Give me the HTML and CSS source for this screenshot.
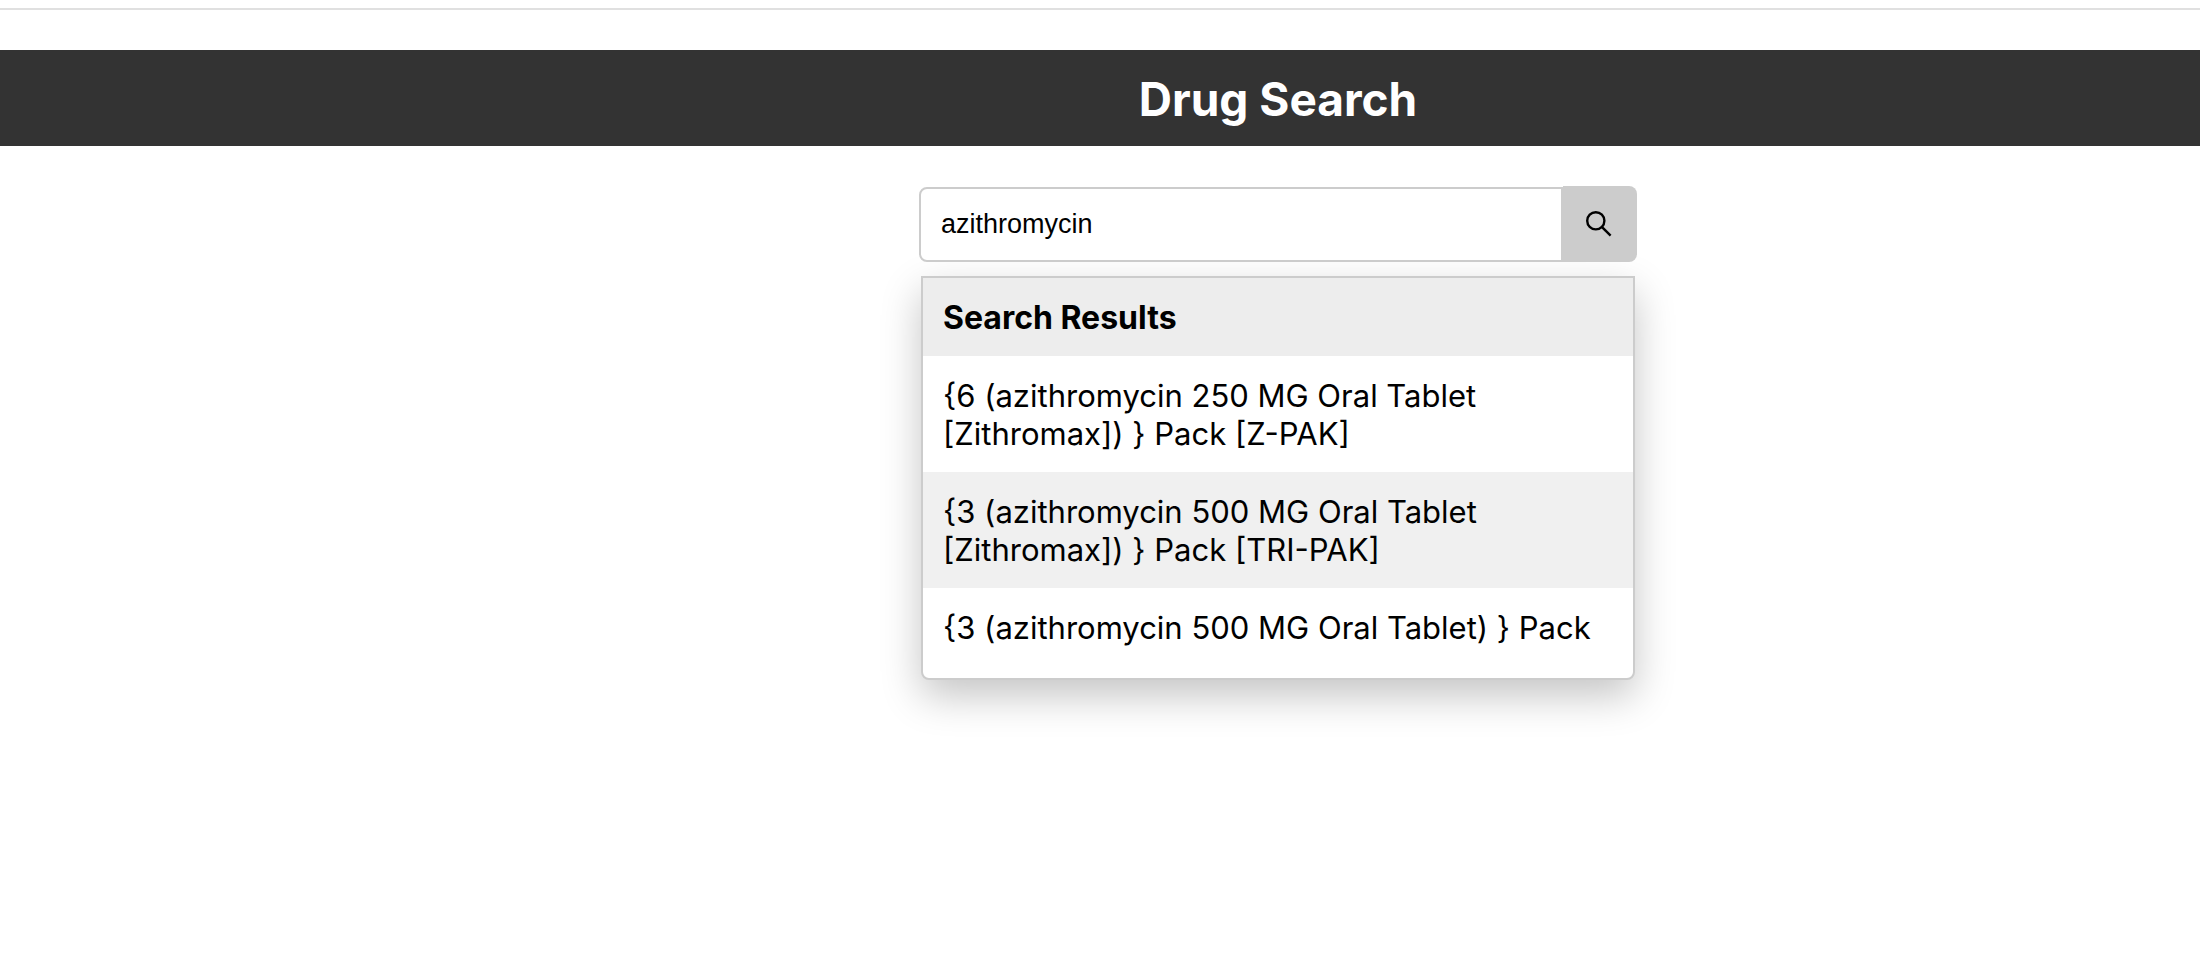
FILE: index.html
```html
<!DOCTYPE html>
<html lang="en">
<head>
<meta charset="utf-8">
<meta name="viewport" content="width=device-width, initial-scale=1">
<title>Drug Search</title>
<link rel="stylesheet" href="styles.css">
</head>
<body>
<div class="divider"></div>
<header class="banner"><h1 class="banner-title">Drug Search</h1></header>
<main class="content">
  <div class="search">
    <form class="search-form" role="search">
      <input class="search-input" type="text" aria-label="Drug name" value="azithromycin">
      <button class="search-button" type="button" aria-label="Search">
        <svg class="search-icon" viewBox="0 0 26 26" aria-hidden="true">
          <circle cx="9.8" cy="9.8" r="8.6"/>
          <path d="M15.8 15.8L24.6 24.6"/>
        </svg>
      </button>
    </form>
    <section class="results">
      <h2 class="results-title">Search Results</h2>
      <ul class="results-list">
        <li class="result">{6 (azithromycin 250 MG Oral Tablet [Zithromax]) } Pack [Z-PAK]</li>
        <li class="result result-active">{3 (azithromycin 500 MG Oral Tablet [Zithromax]) } Pack [TRI-PAK]</li>
        <li class="result">{3 (azithromycin 500 MG Oral Tablet) } Pack</li>
      </ul>
    </section>
  </div>
</main>
</body>
</html>
```
FILE: styles.css
```css
* {
  box-sizing: border-box;
}

body {
  min-height: 100vh;
  margin: 0;
  padding-top: 8px;
  background: #fff;
  color: #000;
  font-family: Inter, "Liberation Sans", sans-serif;
}

.divider {
  height: 2px;
  margin-bottom: 40px;
  background: #e0e0e0;
}

.banner {
  padding: 21px 0 19px 356px;
  background: #333;
}

.banner-title {
  margin: 0;
  color: #fff;
  font-size: 46px;
  font-weight: 700;
  line-height: 56px;
  text-align: center;
}

.content {
  display: flex;
  justify-content: center;
  padding: 40px 0 80px 356px;
}

.search {
  flex: 0 1 718px;
}

.search-form {
  display: flex;
  align-items: flex-end;
}

.search-input {
  flex: 1;
  min-width: 0;
  height: 75px;
  padding: 0 20px;
  border: 2px solid #ccc;
  border-radius: 8px 0 0 8px;
  outline: none;
  background: #fff;
  color: #000;
  font-family: "Liberation Sans", Arial, sans-serif;
  font-size: 27px;
}

.search-button {
  display: flex;
  align-items: center;
  justify-content: center;
  width: 74px;
  height: 76px;
  padding: 0 2px 0 0;
  border: 0;
  border-radius: 0 8px 8px 0;
  background: #ccc;
}

.search-icon {
  width: 26px;
  height: 26px;
  fill: none;
  stroke: #000;
  stroke-width: 2.4;
}

.results {
  margin: 14px 2px 0;
  padding-bottom: 12px;
  border: 2px solid #ccc;
  border-radius: 0 0 8px 8px;
  background: #fff;
  box-shadow: 0 16px 40px rgba(0, 0, 0, 0.23);
}

.results-title,
.result {
  padding: 21px 20px 19px;
  font-size: 31px;
  line-height: 38px;
}

.results-title {
  margin: 0;
  background: #ededed;
  font-size: 32px;
  font-weight: 700;
}

.results-list {
  margin: 0;
  padding: 0;
  list-style: none;
}

.result-active {
  background: #f0f0f0;
}
```
